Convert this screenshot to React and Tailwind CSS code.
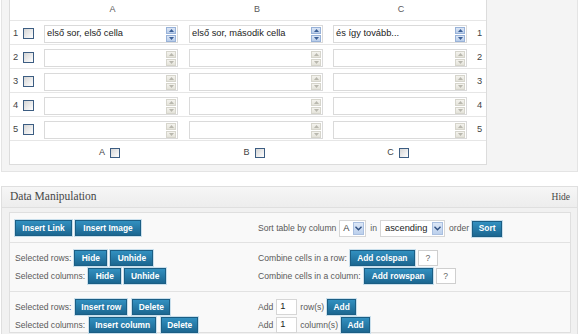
import React from 'react';

const Spin = ({ active }) => (
  <div className="flex flex-col gap-[1px] mr-[1px]">
    {[0, 1].map((i) => (
      <div
        key={i}
        className={
          active
            ? 'w-[10px] h-[7px] flex items-center justify-center border border-[#98b2d8] bg-gradient-to-b from-[#dbe6f6] to-[#b9cde9]'
            : 'w-[10px] h-[7px] flex items-center justify-center border border-[#d6d5cc] bg-gradient-to-b from-[#f4f3ee] to-[#e4e3da]'
        }
      >
        <svg width="5" height="3" viewBox="0 0 5 3">
          {i === 0 ? (
            <path d="M0 3 L2.5 0 L5 3 Z" fill={active ? '#3b5f96' : '#b9b8ae'} />
          ) : (
            <path d="M0 0 L2.5 3 L5 0 Z" fill={active ? '#3b5f96' : '#b9b8ae'} />
          )}
        </svg>
      </div>
    ))}
  </div>
);

const Cell = ({ text, active }) => (
  <div className="pl-[4px] pt-[4px]">
    <div className="w-[134px] h-[18px] bg-white border border-[#dadada] flex items-center justify-between">
      <span className="pl-[2px] text-[9.3px] text-[#222] whitespace-nowrap">{text}</span>
      <Spin active={active} />
    </div>
  </div>
);

const Check = ({ small }) => (
  <div
    className={
      small
        ? 'w-[10px] h-[10px] border border-[#3c5d82] bg-gradient-to-br from-[#d5d5d5] to-white'
        : 'w-[11px] h-[11px] border border-[#3c5d82] bg-gradient-to-br from-[#d5d5d5] to-white'
    }
  />
);

const Btn = ({ className, children }) => (
  <div
    className={`h-[16px] flex items-center justify-center text-white font-bold text-[8.4px] bg-gradient-to-b from-[#3290c0] to-[#1c6791] border border-[#1b5e84] shadow-[0_0_0_1px_#c9dfec] shrink-0 ${className}`}
  >
    {children}
  </div>
);

const Q = () => (
  <div className="w-[20px] h-[16px] ml-[3px] flex items-center justify-center bg-white border border-[#cfcfcf] text-[8.6px] text-[#666]">
    ?
  </div>
);

const Arrow = () => (
  <div className="w-[11px] h-[13px] flex items-center justify-center border border-[#a9bfe0] bg-gradient-to-b from-[#dce7f7] to-[#bcd0ec]">
    <svg width="7" height="5" viewBox="0 0 7 5">
      <path d="M0.5 0.8 L3.5 3.8 L6.5 0.8" stroke="#2f4f80" strokeWidth="1.4" fill="none" />
    </svg>
  </div>
);

export default function App() {
  const rows = [
    ['első sor, első cella', 'első sor, második cella', 'és így tovább...'],
    ['', '', ''],
    ['', '', ''],
    ['', '', ''],
    ['', '', ''],
  ];
  return (
    <div className="w-[580px] h-[334px] overflow-hidden bg-white font-['Liberation_Sans',Arial,sans-serif] text-[#5a5a5a] text-[8.6px]">
      {/* top panel */}
      <div className="ml-[1px] w-[577px] bg-[#f4f4f4] border-x border-b border-[#e4e4e4] pl-[7px] pb-[6px]">
        <div className="w-[478px] bg-white border-x border-b border-[#dcdcdc]">
          <div className="grid grid-cols-[30px_145px_144px_144px_13px] h-[21px] border-b border-[#e6e6e6] items-center">
            <div />
            <div className="text-center text-[9px]">A</div>
            <div className="text-center text-[9px]">B</div>
            <div className="text-center text-[9px]">C</div>
            <div />
          </div>
          {rows.map((r, i) => (
            <div key={i} className="grid grid-cols-[30px_145px_144px_144px_13px] h-[24px] border-b border-[#e6e6e6]">
              <div className="flex items-center pl-[3px] pt-[2px] gap-[5px]">
                <span className="text-[9.3px] w-[5px] text-[#444]">{i + 1}</span>
                <Check />
              </div>
              <Cell text={r[0]} active={i === 0} />
              <Cell text={r[1]} active={i === 0} />
              <Cell text={r[2]} active={i === 0} />
              <div className="flex items-center pt-[2px] pl-[4px] text-[9.3px] text-[#444]">{i + 1}</div>
            </div>
          ))}
          <div className="grid grid-cols-[30px_145px_144px_144px_13px] h-[23px] items-center">
            <div />
            {['A', 'B', 'C'].map((c) => (
              <div key={c} className="flex items-center justify-center gap-[5px] pr-[6px]">
                <span className="text-[9px] text-[#444]">{c}</span>
                <Check small />
              </div>
            ))}
            <div />
          </div>
        </div>
      </div>

      {/* bottom panel */}
      <div className="mt-[14px] ml-[1px] w-[577px] border border-[#dfdfdf] bg-[#f1f1f1] pb-[10px]">
        <div className="h-[21px] border-b border-[#dfdfdf] flex items-center justify-between pl-[8px] pr-[7px] bg-gradient-to-b from-[#f6f6f6] to-[#ededed] font-['Liberation_Serif',serif] text-[#464646]">
          <span className="text-[11.5px]">Data Manipulation</span>
          <span className="text-[9.5px]">Hide</span>
        </div>
        <div className="mt-[4px] ml-[7px] w-[562px] bg-[#f9f9f9] border border-[#dfdfdf]">
          {/* section 1 */}
          <div className="grid grid-cols-[248px_1fr] h-[30px] border-b border-[#e2e2e2] pt-[7px]">
            <div className="pl-[5px] flex items-start gap-[3px]">
              <Btn className="w-[57px]">Insert Link</Btn>
              <Btn className="w-[66px]">Insert Image</Btn>
            </div>
            <div className="flex items-center h-[17px] whitespace-nowrap">
              <span>Sort table by column</span>
              <div className="ml-[3px] w-[27px] h-[17px] bg-white border border-[#d6d6d6] flex items-center justify-between pl-[3px] pr-[1px]">
                <span className="text-[9.3px] text-[#444]">A</span>
                <Arrow />
              </div>
              <span className="ml-[4px]">in</span>
              <div className="ml-[3px] w-[65px] h-[17px] bg-white border border-[#d6d6d6] flex items-center justify-between pl-[4px] pr-[1px]">
                <span className="text-[9.3px] text-[#222]">ascending</span>
                <Arrow />
              </div>
              <span className="ml-[4px]">order</span>
              <Btn className="w-[30px] ml-[3px]">Sort</Btn>
            </div>
          </div>
          {/* section 2 */}
          <div className="grid grid-cols-[248px_1fr] h-[49px] border-b border-[#e2e2e2] pt-[7px]">
            <div className="pl-[5px] flex flex-col gap-[2px]">
              <div className="flex items-center h-[16px] gap-[3px]">
                <span>Selected rows:</span>
                <Btn className="w-[33px]">Hide</Btn>
                <Btn className="w-[43px]">Unhide</Btn>
              </div>
              <div className="flex items-center h-[16px] gap-[3px]">
                <span>Selected columns:</span>
                <Btn className="w-[33px]">Hide</Btn>
                <Btn className="w-[42px]">Unhide</Btn>
              </div>
            </div>
            <div className="flex flex-col gap-[2px]">
              <div className="flex items-center h-[16px] whitespace-nowrap">
                <span className="mr-[3px]">Combine cells in a row:</span>
                <Btn className="w-[65px]">Add colspan</Btn>
                <Q />
              </div>
              <div className="flex items-center h-[16px] whitespace-nowrap">
                <span className="mr-[3px]">Combine cells in a column:</span>
                <Btn className="w-[69px]">Add rowspan</Btn>
                <Q />
              </div>
            </div>
          </div>
          {/* section 3 */}
          <div className="grid grid-cols-[248px_1fr] h-[40px] pt-[7px]">
            <div className="pl-[5px] flex flex-col gap-[2px]">
              <div className="flex items-center h-[16px] gap-[4px]">
                <span>Selected rows:</span>
                <Btn className="w-[52px]">Insert row</Btn>
                <Btn className="w-[38px] ml-[1px]">Delete</Btn>
              </div>
              <div className="flex items-center h-[16px] gap-[4px]">
                <span>Selected columns:</span>
                <Btn className="w-[67px]">Insert column</Btn>
                <Btn className="w-[37px] ml-[1px]">Delete</Btn>
              </div>
            </div>
            <div className="flex flex-col gap-[2px]">
              <div className="flex items-center h-[16px] whitespace-nowrap">
                <span>Add</span>
                <div className="ml-[3px] w-[21px] h-[16px] bg-white border border-[#d6d6d6] flex items-center pl-[3px] text-[9.3px] text-[#222]">1</div>
                <span className="ml-[3px]">row(s)</span>
                <Btn className="w-[29px] ml-[3px]">Add</Btn>
              </div>
              <div className="flex items-center h-[16px] whitespace-nowrap">
                <span>Add</span>
                <div className="ml-[3px] w-[21px] h-[16px] bg-white border border-[#d6d6d6] flex items-center pl-[3px] text-[9.3px] text-[#222]">1</div>
                <span className="ml-[3px]">column(s)</span>
                <Btn className="w-[29px] ml-[3px]">Add</Btn>
              </div>
            </div>
          </div>
        </div>
      </div>
    </div>
  );
}
